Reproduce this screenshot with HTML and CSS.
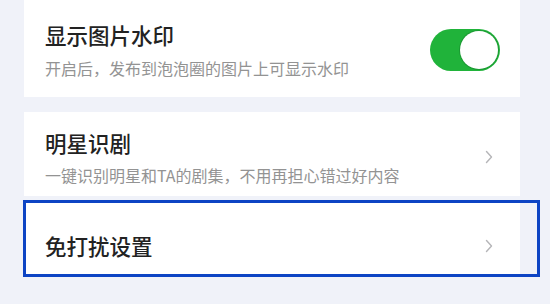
FILE: index.html
```html
<!DOCTYPE html>
<html lang="zh">
<head>
<meta charset="utf-8">
<link rel="stylesheet" href="styles.css">
</head>
<body>
<div class="page">
  <div class="card card-toggle">
    <div class="text">
      <div class="title">显示图片水印</div>
      <div class="sub">开启后，发布到泡泡圈的图片上可显示水印</div>
    </div>
    <div class="switch"><span class="knob"></span></div>
  </div>

  <div class="card card-link">
    <div class="text">
      <div class="title">明星识剧</div>
      <div class="sub">一键识别明星和TA的剧集，不用再担心错过好内容</div>
    </div>
    <svg class="chev" width="8" height="14" viewBox="0 0 8 14"><path d="M1.5 1.5 L6.5 7 L1.5 12.5" fill="none" stroke="#b5b5b8" stroke-width="1.4" stroke-linecap="round" stroke-linejoin="round"/></svg>
  </div>

  <div class="card card-single highlighted">
    <div class="text">
      <div class="title">免打扰设置</div>
    </div>
    <svg class="chev" width="8" height="14" viewBox="0 0 8 14"><path d="M1.5 1.5 L6.5 7 L1.5 12.5" fill="none" stroke="#b5b5b8" stroke-width="1.4" stroke-linecap="round" stroke-linejoin="round"/></svg>
  </div>
</div>
</body>
</html>
```
FILE: styles.css
```css
html, body {
  margin: 0;
  padding: 0;
}
body {
  width: 550px;
  height: 304px;
  overflow: hidden;
  background: #f0f2f9;
  font-family: "Noto Sans CJK SC", "Noto Sans", sans-serif;
}
.page {
  display: flex;
  flex-direction: column;
  padding-left: 24px;
  width: 496px;
}
.card {
  background: #ffffff;
  display: flex;
  align-items: center;
  padding: 0 20px 0 21px;
  position: relative;
}
.text {
  flex: 1;
  display: flex;
  flex-direction: column;
}
.title {
  font-size: 21.5px;
  line-height: 30px;
  color: #222222;
  font-weight: 500;
}
.sub {
  font-size: 16px;
  line-height: 22px;
  color: #939393;
  margin-top: 7px;
}
.card-toggle {
  height: 97px;
  box-sizing: border-box;
  padding-top: 2px;
}
.card-link {
  margin-top: 15px;
  height: 84px;
  box-sizing: border-box;
  padding-top: 6px;
}
.card-link .sub {
  margin-top: 6px;
}
.card-single {
  margin-top: 7px;
  height: 71px;
  box-sizing: border-box;
  padding-top: 14px;
}
.switch {
  width: 70px;
  height: 42px;
  border-radius: 21px;
  background: #20b33a;
  display: flex;
  align-items: center;
  justify-content: flex-end;
  box-sizing: border-box;
  padding: 2px;
}
.knob {
  width: 38px;
  height: 38px;
  border-radius: 50%;
  background: #ffffff;
  box-shadow: 0 0 0 1px #1a9a32;
}
.chev {
  margin-right: 7px;
}
.highlighted::after {
  content: "";
  position: absolute;
  top: -3px;
  bottom: -3px;
  left: -1px;
  right: -20px;
  border: 3px solid #0d44c4;
  pointer-events: none;
}
```
